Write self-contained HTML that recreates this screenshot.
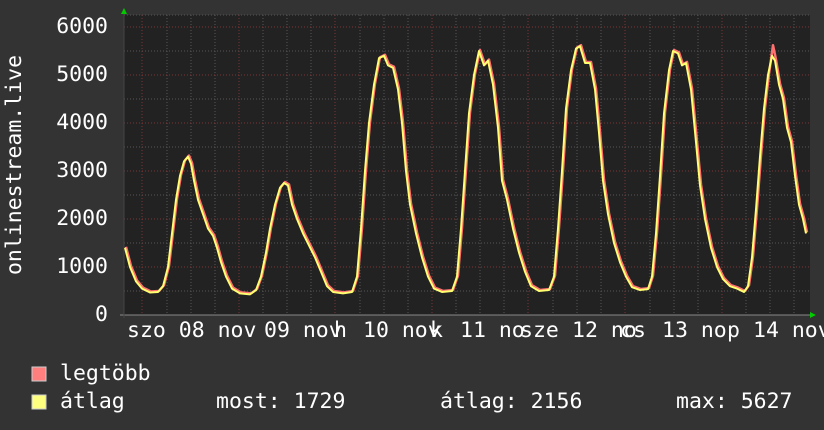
<!DOCTYPE html>
<html><head><meta charset="utf-8"><style>
html,body{margin:0;padding:0;background:#333;}
body{width:824px;height:430px;position:relative;overflow:hidden;font-family:"DejaVu Sans Mono","Liberation Mono",monospace;color:#fff;}
.t{position:absolute;font-size:21.5px;line-height:22px;white-space:pre;}
.yl{position:absolute;right:716px;font-size:21.5px;line-height:22px;}
</style></head><body>
<svg width="824" height="430" style="position:absolute;left:0;top:0">
<rect x="124" y="15" width="686" height="300" fill="#222"/>
<g stroke="#555" stroke-dasharray="1,2" stroke-width="1">
<path d="M124 291H810M124 243H810M124 195H810M124 147H810M124 99H810M124 51H810M124 15H810"/>
<path d="M167 15V315M191 15V315M215 15V315M263 15V315M287 15V315M311 15V315M360 15V315M384 15V315M408 15V315M456 15V315M480 15V315M504 15V315M553 15V315M577 15V315M601 15V315M650 15V315M674 15V315M698 15V315M746 15V315M770 15V315M794 15V315"/>
</g>
<g stroke="#7a3535" stroke-dasharray="1,2">
<path d="M124 267H810M124 219H810M124 171H810M124 123H810M124 75H810M124 27H810"/>
<path d="M142 15V315M239 15V315M335 15V315M432 15V315M528 15V315M625 15V315M722 15V315"/>
</g>
<line x1="120" x2="812" y1="315" y2="315" stroke="#888"/>
<line x1="124" x2="124" y1="12" y2="318" stroke="#444"/>
<polygon points="810,312 816,315 810,318" fill="#0c0"/>
<polygon points="121,14 124,8 127,14" fill="#0c0"/>
<g transform="translate(1,-1)"><g transform="translate(0,315) scale(1,-0.048)" fill="none" stroke-linejoin="round">
<polyline vector-effect="non-scaling-stroke" stroke="#ff7070" stroke-width="2.5" points="125,1400 130,1000 136,700 142,550 150,470 158,480 163,600 168,1000 172,1700 176,2400 180,2900 184,3200 188,3300 191,3150 194,2800 198,2400 203,2100 208,1800 213,1650 217,1400 221,1100 226,800 232,550 240,450 250,430 256,520 261,800 266,1300 270,1800 275,2300 280,2650 284,2750 288,2700 292,2300 297,2000 303,1700 309,1450 315,1200 321,900 327,600 333,480 343,450 352,480 357,800 361,1800 365,3000 369,4000 374,4800 379,5350 384,5400 388,5200 393,5150 398,4700 402,4000 406,3000 410,2300 416,1700 422,1200 428,800 434,550 442,480 452,500 457,800 461,1800 465,3000 469,4200 474,5000 479,5500 484,5200 488,5300 493,4800 498,3900 502,2800 507,2400 513,1800 519,1300 525,900 531,600 539,500 549,520 554,800 558,1800 562,3000 566,4300 571,5100 576,5550 580,5600 585,5250 590,5250 595,4700 599,3800 603,2800 608,2100 614,1500 620,1100 626,800 632,580 640,520 648,540 652,800 656,1700 660,2900 664,4200 669,5100 673,5500 678,5450 682,5200 686,5250 691,4700 696,3600 700,2700 705,2000 711,1400 717,1000 723,750 730,600 737,550 744,480 748,600 752,1200 756,2200 760,3300 764,4300 768,5000 772,5600 775,5300 779,4800 783,4500 787,3900 791,3600 795,2900 799,2300 803,2000 806,1700"/>
</g></g>
<g transform="translate(0,315) scale(1,-0.048)" fill="none" stroke-linejoin="round">
<polyline vector-effect="non-scaling-stroke" stroke="#ffff70" stroke-width="2" points="125,1400 130,1000 136,700 142,550 150,470 158,480 163,600 168,1000 172,1700 176,2400 180,2900 184,3200 188,3300 191,3150 194,2800 198,2400 203,2100 208,1800 213,1650 217,1400 221,1100 226,800 232,550 240,450 250,430 256,520 261,800 266,1300 270,1800 275,2300 280,2650 284,2750 288,2700 292,2300 297,2000 303,1700 309,1450 315,1200 321,900 327,600 333,480 343,450 352,480 357,800 361,1800 365,3000 369,4000 374,4800 379,5350 384,5400 388,5200 393,5150 398,4700 402,4000 406,3000 410,2300 416,1700 422,1200 428,800 434,550 442,480 452,500 457,800 461,1800 465,3000 469,4200 474,5000 479,5500 484,5200 488,5300 493,4800 498,3900 502,2800 507,2400 513,1800 519,1300 525,900 531,600 539,500 549,520 554,800 558,1800 562,3000 566,4300 571,5100 576,5550 580,5600 585,5250 590,5250 595,4700 599,3800 603,2800 608,2100 614,1500 620,1100 626,800 632,580 640,520 648,540 652,800 656,1700 660,2900 664,4200 669,5100 673,5500 678,5450 682,5200 686,5250 691,4700 696,3600 700,2700 705,2000 711,1400 717,1000 723,750 730,600 737,550 744,480 748,600 752,1200 756,2200 760,3300 764,4300 768,5000 772,5400 775,5300 779,4800 783,4500 787,3900 791,3600 795,2900 799,2300 803,2000 806,1700"/>
</g>
<rect x="32" y="367" width="14" height="14" fill="#ff7f7f" stroke="#ccc"/>
<rect x="32" y="395" width="14" height="14" fill="#ffff7f" stroke="#ccc"/>
</svg>
<div class="yl" style="top:16px">6000</div>
<div class="yl" style="top:64px">5000</div>
<div class="yl" style="top:112px">4000</div>
<div class="yl" style="top:160px">3000</div>
<div class="yl" style="top:208px">2000</div>
<div class="yl" style="top:256px">1000</div>
<div class="yl" style="top:304px">0</div>
<div class="t" style="left:15px;top:165px;transform:translate(-50%,-50%) rotate(-90deg);transform-origin:center;">onlinestream.live</div>
<div class="t" style="left:127px;top:320px">szo 08 nov</div>
<div class="t" style="left:264px;top:320px">09 nov</div>
<div class="t" style="left:334px;top:320px">h</div>
<div class="t" style="left:363px;top:320px">10 nov</div>
<div class="t" style="left:430px;top:320px">k</div>
<div class="t" style="left:460px;top:320px">11 no</div>
<div class="t" style="left:520px;top:320px">sze</div>
<div class="t" style="left:572px;top:320px">12 no</div>
<div class="t" style="left:620px;top:320px">cs</div>
<div class="t" style="left:662px;top:320px">13 no</div>
<div class="t" style="left:727px;top:320px">p</div>
<div class="t" style="left:753px;top:320px">14 nov</div>
<div class="t" style="left:60px;top:363px">legtöbb</div>
<div class="t" style="left:60px;top:391px">átlag</div>
<div class="t" style="left:216px;top:391px">most: 1729</div>
<div class="t" style="left:440px;top:391px">átlag: 2156</div>
<div class="t" style="left:676px;top:391px">max: 5627</div>
</body></html>
